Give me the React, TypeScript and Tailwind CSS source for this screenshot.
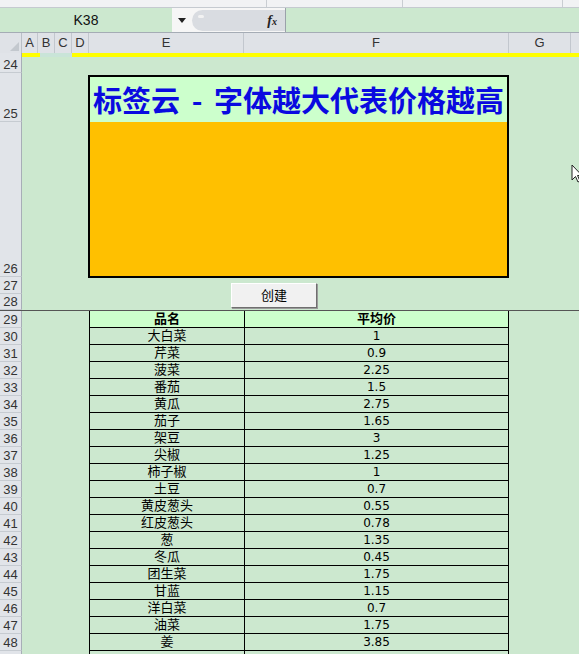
import React from 'react'

type Col = { label: string; w: string }

const COLS: Col[] = [
  { label: 'A', w: 'w-[16px]' },
  { label: 'B', w: 'w-[17px]' },
  { label: 'C', w: 'w-[17px]' },
  { label: 'D', w: 'w-[17px]' },
  { label: 'E', w: 'w-[155px]' },
  { label: 'F', w: 'w-[265px]' },
  { label: 'G', w: 'w-[62px]' },
]

const PRICES: [string, string][] = [
  ['大白菜', '1'],
  ['芹菜', '0.9'],
  ['菠菜', '2.25'],
  ['番茄', '1.5'],
  ['黄瓜', '2.75'],
  ['茄子', '1.65'],
  ['架豆', '3'],
  ['尖椒', '1.25'],
  ['柿子椒', '1'],
  ['土豆', '0.7'],
  ['黄皮葱头', '0.55'],
  ['红皮葱头', '0.78'],
  ['葱', '1.35'],
  ['冬瓜', '0.45'],
  ['团生菜', '1.75'],
  ['甘蓝', '1.15'],
  ['洋白菜', '0.7'],
  ['油菜', '1.75'],
  ['姜', '3.85'],
]

const SANS = 'font-["Liberation_Sans","Noto_Sans_CJK_SC",sans-serif]'

function RowHead({ n, h }: { n?: number; h: string }) {
  return (
    <div
      className={`${h} w-[22px] shrink-0 flex items-end justify-center bg-[#e1e4e9] border-r border-[#a7aeb7] border-b border-b-[#c6cbd1] text-[13px] leading-[15px] text-[#333]`}
    >
      {n}
    </div>
  )
}

function FormulaBar() {
  return (
    <div className="flex h-[25px] border-b border-[#a5acb5]">
      <div className="flex w-[172px] items-center justify-center text-[14px] text-[#111]">K38</div>
      <div className="flex w-[20px] items-center justify-center bg-[#f6f6f6]">
        <svg width="8" height="5" viewBox="0 0 8 5">
          <path d="M0 0 L8 0 L4 5 Z" fill="#222" />
        </svg>
      </div>
      <div className="flex w-[93px] items-center bg-[#f6f6f6]">
        <div className="relative flex h-[21px] flex-1 items-center justify-end rounded-l-full bg-[#d9dce1] pr-[8px]">
          <span className="absolute left-[6px] top-[5px] h-[3px] w-[6px] rounded-full bg-[#f2f2f2]" />
          <span className="font-['Liberation_Serif',serif] text-[14px] font-bold italic text-[#222]">
            f<span className="text-[10px]">x</span>
          </span>
        </div>
      </div>
      <div className="flex-1 border-l border-[#9aa1aa]" />
    </div>
  )
}

function ColumnHeader() {
  return (
    <div className="flex h-[20px] bg-[#dfe2e7]">
      <div className="relative w-[22px] shrink-0 border-r border-[#b9bfc6]">
        <svg className="absolute bottom-[2px] right-[2px]" width="9" height="9" viewBox="0 0 9 9">
          <path d="M9 0 L9 9 L0 9 Z" fill="#c3c8ce" />
        </svg>
      </div>
      {COLS.map((c) => (
        <div
          key={c.label}
          className={`${c.w} shrink-0 flex items-center justify-center border-r border-[#c2c7ce] text-[13px] text-[#333]`}
        >
          {c.label}
        </div>
      ))}
      <div className="flex-1" />
    </div>
  )
}

export default function App() {
  return (
    <div className={`relative h-[654px] w-[579px] overflow-hidden bg-[#cce8cf] ${SANS}`}>
      {/* window strip */}
      <div className="flex h-[8px] border-b border-[#c5cad0] bg-[#f1f2f4]">
        <div className="w-[267px] border-r border-[#c9cdd2]" />
        <div className="w-[136px] border-r border-[#c9cdd2]" />
        <div className="w-[160px] border-r border-[#c9cdd2]" />
        <div className="flex-1" />
      </div>

      <FormulaBar />
      <ColumnHeader />

      {/* row 23: thin yellow band */}
      <div className="flex h-[4px]">
        <div className="w-[22px] shrink-0 bg-[#e1e4e9] border-r border-[#a7aeb7]" />
        <div className="w-[18px] bg-[#ffff00]" />
        <div className="w-[32px] bg-[#c9e4d8]" />
        <div className="flex-1 bg-[#ffff00]" />
      </div>

      <div className="flex">
        <RowHead n={24} h="h-[16px]" />
      </div>
      <div className="flex">
        <RowHead n={25} h="h-[49px]" />
      </div>
      <div className="flex">
        <RowHead n={26} h="h-[155px]" />
      </div>
      <div className="flex">
        <RowHead n={27} h="h-[17px]" />
      </div>
      <div className="flex border-b border-[#555]">
        <RowHead n={28} h="h-[16px]" />
      </div>

      {/* price table */}
      <div className="flex h-[17px]">
        <RowHead n={29} h="h-[17px]" />
        <div className="w-[67px] shrink-0" />
        <div className="w-[155px] shrink-0 border-l border-b border-black bg-[#ccffcc] text-center text-[13px] font-bold leading-[16px]">
          品名
        </div>
        <div className="w-[265px] shrink-0 border-x border-b border-black bg-[#ccffcc] text-center text-[13px] font-bold leading-[16px]">
          平均价
        </div>
      </div>
      {PRICES.map(([name, price], i) => (
        <div key={name} className="flex h-[17px]">
          <RowHead n={30 + i} h="h-[17px]" />
          <div className="w-[67px] shrink-0" />
          <div className="w-[155px] shrink-0 border-l border-b border-black text-center text-[13px] leading-[16px] text-black">
            {name}
          </div>
          <div className="w-[265px] shrink-0 border-x border-b border-black text-center font-['DejaVu_Sans',sans-serif] text-[12px] leading-[16px] text-black">
            {price}
          </div>
        </div>
      ))}
      <div className="flex h-[17px]">
        <RowHead h="h-[17px]" />
        <div className="w-[67px] shrink-0" />
        <div className="w-[155px] shrink-0 border-l border-black" />
        <div className="w-[265px] shrink-0 border-x border-black" />
      </div>

      {/* chart shape over cells E25:F26 */}
      <div className="absolute left-[88px] top-[75px] flex h-[203px] w-[421px] flex-col border-2 border-black bg-[#ffc000]">
        <div className="flex h-[45px] items-center justify-center bg-[#ccffcc] font-['Noto_Sans_CJK_SC',sans-serif] text-[29px] font-bold leading-none text-[#0a0ae0] [word-spacing:5px]">
          标签云 - 字体越大代表价格越高
        </div>
      </div>

      {/* button */}
      <div className="absolute left-[231px] top-[283px] flex h-[25px] w-[86px] items-center justify-center border border-t-[#ffffff] border-l-[#ffffff] border-r-[#6f6f6f] border-b-[#6f6f6f] bg-[#f1f1f1] text-[13px] text-black shadow-[1px_1px_0_#9a9a9a]">
        创建
      </div>

      {/* mouse pointer */}
      <svg className="absolute left-[571px] top-[164px]" width="12" height="20" viewBox="0 0 12 20">
        <path d="M1 1 L1 16 L4.5 12.5 L7 18 L9 17 L6.5 11.5 L11 11.5 Z" fill="#fff" stroke="#222" strokeWidth="1" />
      </svg>
    </div>
  )
}
